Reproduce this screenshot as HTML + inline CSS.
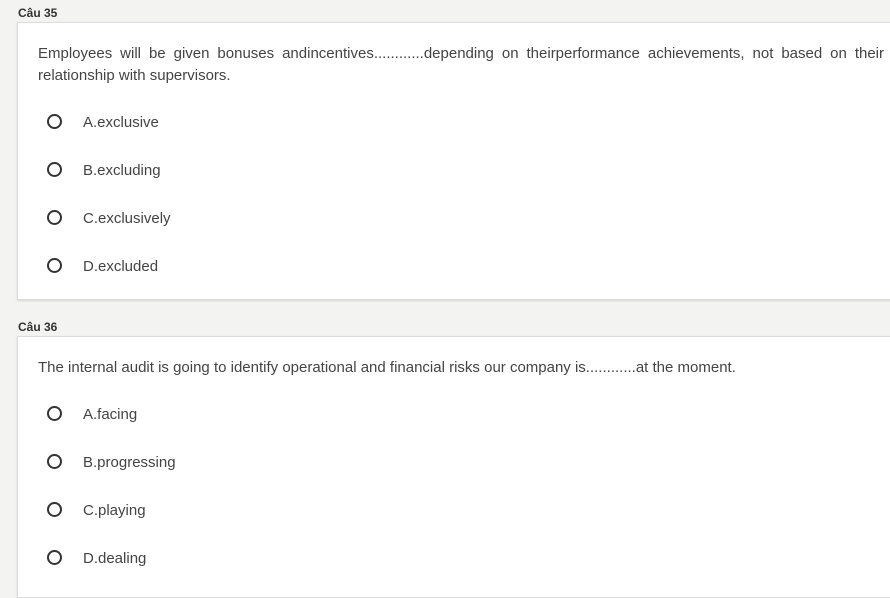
<!DOCTYPE html>
<html><head><meta charset="utf-8"><style>
html,body{margin:0;padding:0;}
body{width:890px;height:581px;overflow:hidden;background:#f3f3f1;font-family:"Liberation Sans",Arial,sans-serif;color:#444;position:relative;}
.lbl{position:absolute;left:18px;font-size:12px;font-weight:bold;color:#333;}
.card{position:absolute;left:17px;width:900px;background:#fff;border:1px solid #ddd;box-shadow:0 1px 2px rgba(0,0,0,.12);}
.q{position:absolute;left:20px;width:846px;font-size:15px;line-height:22px;text-align:justify;color:#444;}
.opt{position:absolute;left:29px;font-size:15px;color:#444;height:20px;line-height:20px;}
.opt i{position:absolute;left:0;top:2px;width:11px;height:11px;border:2px solid #333;border-radius:50%;}
.opt span{position:absolute;left:36px;top:1px;white-space:nowrap;}
</style></head><body>
<div class="lbl" style="top:6px">Câu 35</div>
<div class="card" style="top:22px;height:276px">
  <div class="q" style="top:20px">Employees will be given bonuses andincentives............depending on theirperformance achievements, not based on their relationship with supervisors.</div>
  <div class="opt" style="top:89px"><i></i><span>A.exclusive</span></div>
  <div class="opt" style="top:137px"><i></i><span>B.excluding</span></div>
  <div class="opt" style="top:185px"><i></i><span>C.exclusively</span></div>
  <div class="opt" style="top:233px"><i></i><span>D.excluded</span></div>
</div>
<div class="lbl" style="top:320px">Câu 36</div>
<div class="card" style="top:336px;height:260px">
  <div class="q" style="top:20px;text-align:left">The internal audit is going to identify operational and financial risks our company is............at the moment.</div>
  <div class="opt" style="top:67px"><i></i><span>A.facing</span></div>
  <div class="opt" style="top:115px"><i></i><span>B.progressing</span></div>
  <div class="opt" style="top:163px"><i></i><span>C.playing</span></div>
  <div class="opt" style="top:211px"><i></i><span>D.dealing</span></div>
</div>
</body></html>
